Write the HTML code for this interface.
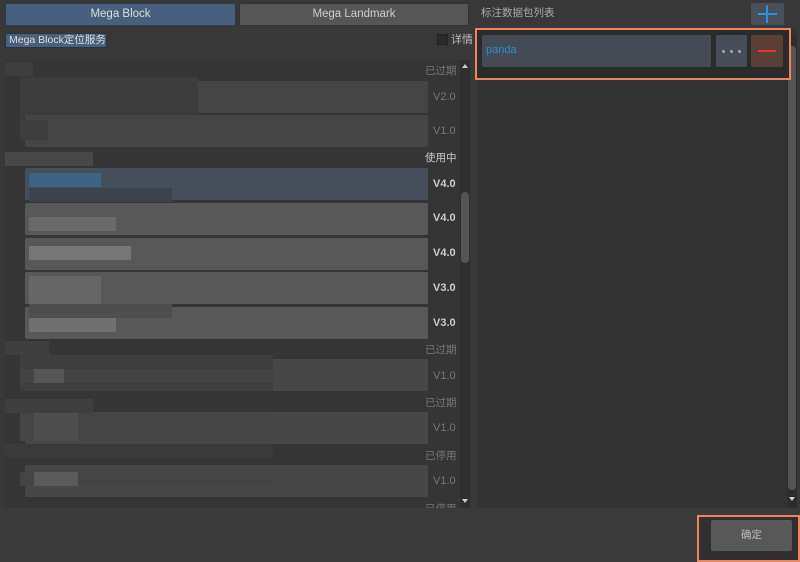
<!DOCTYPE html>
<html><head><meta charset="utf-8"><style>
*{margin:0;padding:0;box-sizing:border-box}
body{width:800px;height:562px;background:#3a3a3a;position:relative;overflow:hidden;font-family:"Liberation Sans","Noto Sans CJK SC",sans-serif;font-size:11px;color:#bbb;line-height:14px}
.a{position:absolute;white-space:nowrap}
.card{position:absolute;left:25px;width:403px;height:32px;background:#474747;border-radius:2px}
.hd{position:absolute;left:425px;font-size:10.5px;color:#777;white-space:nowrap}
.ver{position:absolute;left:433px;font-size:11px;color:#777}
.px{position:absolute}
</style></head><body>
<div class="a" style="left:0;top:0;width:800px;height:508px;background:#383838"></div>
<div class="a" style="left:5px;top:3px;width:231px;height:23px;background:#48607c;border:1px solid #2e3a48;border-radius:2px;color:#ddd;text-align:center;line-height:21px;font-size:11.5px">Mega Block</div>
<div class="a" style="left:239px;top:3px;width:230px;height:23px;background:#565656;border:1px solid #333;border-radius:2px;color:#ccc;text-align:center;line-height:21px;font-size:11.5px">Mega Landmark</div>
<div class="a" style="left:5px;top:33px;width:102px;height:15px;background:#48607c;border:1px solid #2a3440;border-radius:2px;color:#ddd;line-height:13px;padding-left:3px;font-size:10.5px;overflow:hidden">Mega Block定位服务</div>
<div class="a" style="left:437px;top:34px;width:11px;height:11px;background:#2a2a2a;border:1px solid #222"></div>
<div class="a" style="left:451px;top:33px;color:#bbb">详情</div>
<div class="a" style="left:5px;top:60px;width:465px;height:448px;background:#353535"></div>
<!-- left list -->
<div class="px" style="left:5px;top:62px;width:28px;height:14px;background:#3d3d3d"></div>
<div class="hd" style="top:64px">已过期</div>
<div class="card" style="left:20px;top:81px;width:408px;background:#444"></div>
<div class="px" style="left:20px;top:77px;width:178px;height:42px;background:#3c3c3c"></div>
<div class="ver" style="top:90px">V2.0</div>
<div class="card" style="top:115px;background:#454545"></div>
<div class="px" style="left:20px;top:120px;width:28px;height:20px;background:#3e3e3e"></div>
<div class="ver" style="top:124px">V1.0</div>
<div class="px" style="left:5px;top:152px;width:88px;height:14px;background:#484848"></div>
<div class="a" style="left:425px;top:151px;color:#ccc;font-size:10.5px">使用中</div>
<div class="card" style="top:168px;background:#454e5a"></div>
<div class="px" style="left:29px;top:173px;width:72px;height:14px;background:#3a6480"></div>
<div class="px" style="left:29px;top:188px;width:143px;height:14px;background:#3d434b"></div>
<div class="ver" style="top:177px;color:#ccc;font-weight:bold">V4.0</div>
<div class="card" style="top:203px;background:#585858"></div>
<div class="px" style="left:29px;top:217px;width:87px;height:14px;background:#6a6a6a"></div>
<div class="ver" style="top:211px;color:#ccc;font-weight:bold">V4.0</div>
<div class="card" style="top:238px;background:#585858"></div>
<div class="px" style="left:29px;top:246px;width:102px;height:14px;background:#767676"></div>
<div class="ver" style="top:246px;color:#ccc;font-weight:bold">V4.0</div>
<div class="card" style="top:272px;background:#585858"></div>
<div class="px" style="left:29px;top:276px;width:72px;height:28px;background:#666"></div>
<div class="ver" style="top:281px;color:#ccc;font-weight:bold">V3.0</div>
<div class="card" style="top:307px;background:#585858"></div>
<div class="px" style="left:29px;top:304px;width:143px;height:14px;background:#4e4e4e"></div>
<div class="px" style="left:29px;top:318px;width:87px;height:14px;background:#707070"></div>
<div class="ver" style="top:316px;color:#ccc;font-weight:bold">V3.0</div>
<div class="px" style="left:5px;top:341px;width:44px;height:14px;background:#3f3f3f"></div>
<div class="hd" style="top:343px">已过期</div>
<div class="card" style="top:359px;background:#474747"></div>
<div class="px" style="left:20px;top:355px;width:253px;height:14px;background:#3e3e3e"></div>
<div class="px" style="left:20px;top:369px;width:253px;height:14px;background:#444"></div>
<div class="px" style="left:34px;top:369px;width:30px;height:14px;background:#555"></div>
<div class="px" style="left:20px;top:383px;width:253px;height:8px;background:#3e3e3e"></div>
<div class="ver" style="top:369px">V1.0</div>
<div class="hd" style="top:396px">已过期</div>
<div class="card" style="top:412px;background:#474747"></div>
<div class="px" style="left:5px;top:399px;width:88px;height:14px;background:#3f3f3f"></div>
<div class="px" style="left:20px;top:413px;width:253px;height:28px;background:#454545"></div>
<div class="px" style="left:34px;top:413px;width:44px;height:28px;background:#4e4e4e"></div>
<div class="ver" style="top:421px">V1.0</div>
<div class="hd" style="top:449px">已停用</div>
<div class="card" style="top:465px;background:#474747"></div>
<div class="px" style="left:5px;top:444px;width:268px;height:14px;background:#3a3a3a"></div>
<div class="px" style="left:20px;top:472px;width:253px;height:14px;background:#444"></div>
<div class="px" style="left:34px;top:472px;width:44px;height:14px;background:#5a5a5a"></div>
<div class="ver" style="top:474px">V1.0</div>
<div class="hd" style="top:502px;height:6px;overflow:hidden">已停用</div>
<!-- left scrollbar -->
<div class="a" style="left:460px;top:60px;width:10px;height:448px;background:#2f2f2f"></div>
<div class="a" style="left:462px;top:64px;width:0;height:0;border-left:3px solid transparent;border-right:3px solid transparent;border-bottom:4px solid #ccc"></div>
<div class="a" style="left:461px;top:192px;width:8px;height:71px;background:#555;border-radius:4px"></div>
<div class="a" style="left:462px;top:499px;width:0;height:0;border-left:3px solid transparent;border-right:3px solid transparent;border-top:4px solid #ccc"></div>
<!-- right -->
<div class="a" style="left:481px;top:6px;color:#aaa;font-size:10.5px">标注数据包列表</div>
<div class="a" style="left:751px;top:3px;width:33px;height:22px;background:#47505b;border-radius:2px"></div>
<div class="a" style="left:758px;top:13px;width:19px;height:2px;background:#2f8fe0"></div>
<div class="a" style="left:766px;top:5px;width:2px;height:18px;background:#2f8fe0"></div>
<div class="a" style="left:477px;top:28px;width:320px;height:480px;background:#333"></div>
<div class="a" style="left:787px;top:36px;width:10px;height:472px;background:#2d2d2d"></div>
<div class="a" style="left:788px;top:46px;width:8px;height:444px;background:#555;border-radius:4px"></div>
<div class="a" style="left:789px;top:497px;width:0;height:0;border-left:3px solid transparent;border-right:3px solid transparent;border-top:4px solid #ccc"></div>
<div class="a" style="left:475px;top:28px;width:316px;height:52px;border:2px solid #ec8660;background:#2b2b2b"></div>
<div class="a" style="left:482px;top:35px;width:229px;height:32px;background:#444b55;border-radius:2px;color:#2a8fc8;line-height:31px;padding-left:4px;font-size:11px">panda</div>
<div class="a" style="left:716px;top:35px;width:31px;height:32px;background:#464d57;border-radius:2px"></div>
<div class="a" style="left:722px;top:50px;width:3px;height:3px;border-radius:50%;background:#9aa"></div>
<div class="a" style="left:730px;top:50px;width:3px;height:3px;border-radius:50%;background:#9aa"></div>
<div class="a" style="left:738px;top:50px;width:3px;height:3px;border-radius:50%;background:#9aa"></div>
<div class="a" style="left:751px;top:35px;width:32px;height:32px;background:#5a3f35;border-radius:2px"></div>
<div class="a" style="left:758px;top:50px;width:18px;height:2px;background:#e23a2a"></div>
<!-- bottom -->
<div class="a" style="left:697px;top:515px;width:103px;height:47px;border:2px solid #ec8660;background:#303030"></div>
<div class="a" style="left:711px;top:520px;width:81px;height:31px;background:#585858;border-radius:2px;color:#bbb;text-align:center;line-height:31px;font-size:10.5px">确定</div>
</body></html>
